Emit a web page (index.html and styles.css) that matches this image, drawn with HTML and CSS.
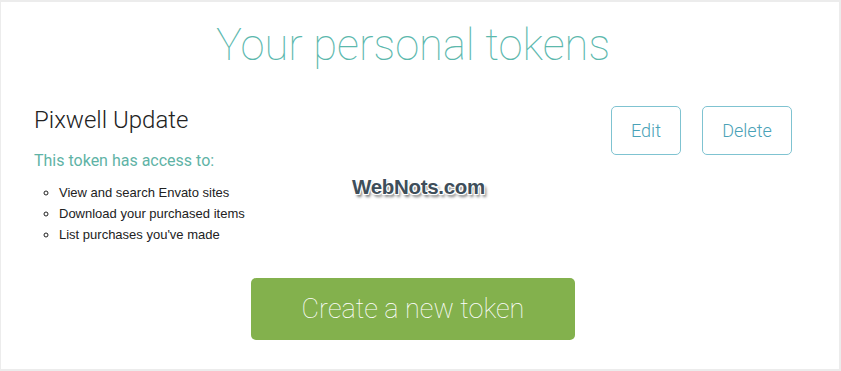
FILE: index.html
```html
<!DOCTYPE html>
<html>
<head>
  <meta charset="UTF-8">
  <title>Your personal tokens</title>
  <link rel="stylesheet" href="styles.css">
</head>
<body>
  <div class="page">
    <div class="content">
      <!-- 标题 -->
      <h1 class="page-title">Your personal tokens</h1>

      <!-- token 行 -->
      <div class="token-row">
        <div class="token-info">
          <h3 class="token-name">Pixwell Update</h3>
          <p class="token-access">This token has access to:</p>
          <ul class="token-scopes">
            <li>View and search Envato sites</li>
            <li>Download your purchased items</li>
            <li>List purchases you've made</li>
          </ul>
        </div>
        <div class="token-actions">
          <button class="outline-button edit-button">Edit</button>
          <button class="outline-button delete-button">Delete</button>
        </div>
      </div>

      <div class="create-area">
        <button class="create-button">Create a new token</button>
      </div>
    </div>

    <div class="watermark">WebNots.com</div>
  </div>
</body>
</html>
```

FILE: styles.css
```css
body {
  margin: 0;
  padding: 0;
  font-family: Roboto, "Liberation Sans", Arial, sans-serif;
  background-color: #ebebeb;
}

.page {
  position: relative;
  height: 371px;
  box-sizing: border-box;
  border-top: 2px solid #ececec;
  border-left: 1px solid #ececec;
  border-right: 2px solid #ececec;
  border-bottom: 2px solid #ececec;
  background-color: white;
  overflow: hidden;
}

.content {
  padding: 16px 47px 0 33px;
}

/* 标题 */
.page-title {
  margin: 0;
  font-size: 43.5px;
  line-height: 56px;
  font-weight: 100;
  color: #5cb8ad;
  text-align: center;
}

/* token 行 */
.token-row {
  display: flex;
  justify-content: space-between;
  align-items: flex-start;
  margin-top: 32px;
}

.token-name {
  margin: 0;
  font-size: 24px;
  line-height: 28px;
  font-weight: 300;
  color: #222;
}

.token-access {
  margin: 16px 0 0;
  font-size: 16px;
  line-height: 22px;
  font-weight: 400;
  color: #5fb3a6;
}

.token-scopes {
  margin: 10px 0 0;
  padding-left: 25px;
  list-style: circle;
  font-family: "Liberation Sans", Arial, sans-serif;
  font-size: 13px;
  line-height: 21px;
  color: #222;
}

.token-actions {
  display: flex;
  gap: 21px;
}

.outline-button {
  height: 49px;
  padding: 0;
  border: 1px solid #7fc3d1;
  border-radius: 5px;
  background-color: white;
  font-family: Roboto, sans-serif;
  font-size: 18px;
  font-weight: 300;
  color: #4aa2b7;
  cursor: pointer;
}

.edit-button {
  width: 70px;
}

.delete-button {
  width: 90px;
}

/* 创建按钮 */
.create-area {
  display: flex;
  justify-content: center;
  margin-top: 33px;
}

.create-button {
  width: 324px;
  height: 62px;
  border: none;
  border-radius: 5px;
  background-color: #83b14d;
  color: white;
  font-family: Roboto, sans-serif;
  font-size: 27px;
  font-weight: 100;
  cursor: pointer;
}

/* 水印 */
.watermark {
  position: absolute;
  left: 351px;
  top: 173px;
  font-family: "Liberation Sans", Arial, sans-serif;
  font-size: 20.5px;
  font-weight: bold;
  letter-spacing: -0.3px;
  color: #3e4e5a;
  text-shadow: -1px -1px 0 #fff, 1px -1px 0 #fff, -1px 1px 0 #fff, 1px 1px 0 #fff, 2px 3px 3px rgba(0, 0, 0, 0.55);
}
```
